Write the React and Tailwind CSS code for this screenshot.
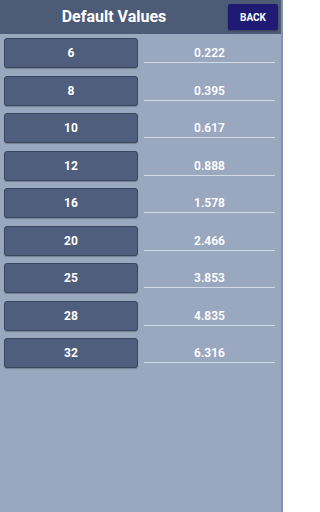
import React from "react";

const rows = [
  ["6", "0.222"],
  ["8", "0.395"],
  ["10", "0.617"],
  ["12", "0.888"],
  ["16", "1.578"],
  ["20", "2.466"],
  ["25", "3.853"],
  ["28", "4.835"],
  ["32", "6.316"],
];

export default function App() {
  return (
    <div
      className="w-[283px] h-[512px] bg-[#9aa8bf] flex flex-col border-r-2 border-[#8593aa] overflow-hidden"
      style={{ fontFamily: "Roboto, 'Liberation Sans', sans-serif" }}
    >
      <div className="h-[34px] bg-[#4e5b77] flex items-center shrink-0">
        <div className="flex-1 text-center text-white font-bold text-[16px] leading-none">
          Default Values
        </div>
        <button className="w-[50px] h-[26px] mr-[3px] bg-[#1f1a74] text-white font-bold text-[10px] rounded-[2px] shadow-[0_1px_2px_rgba(0,0,0,0.35)]">
          BACK
        </button>
      </div>
      <div className="flex flex-col gap-[7.5px] pt-[4px] pl-[4px] pr-[6px]">
        {rows.map(([a, b]) => (
          <div key={a} className="flex items-start">
            <div className="w-[134px] h-[30px] bg-[#4f5e7c] border border-[#3a465e] rounded-[3px] shadow-[0_1px_1px_rgba(0,0,0,0.25)] flex items-center justify-center text-white font-bold text-[12px]">
              {a}
            </div>
            <div className="flex-1 ml-[6px] h-[25px] border-b-[1.5px] border-[#d3dae5] flex items-end justify-center pb-[2px] text-white font-semibold text-[12px] leading-[14px]">
              {b}
            </div>
          </div>
        ))}
      </div>
    </div>
  );
}
